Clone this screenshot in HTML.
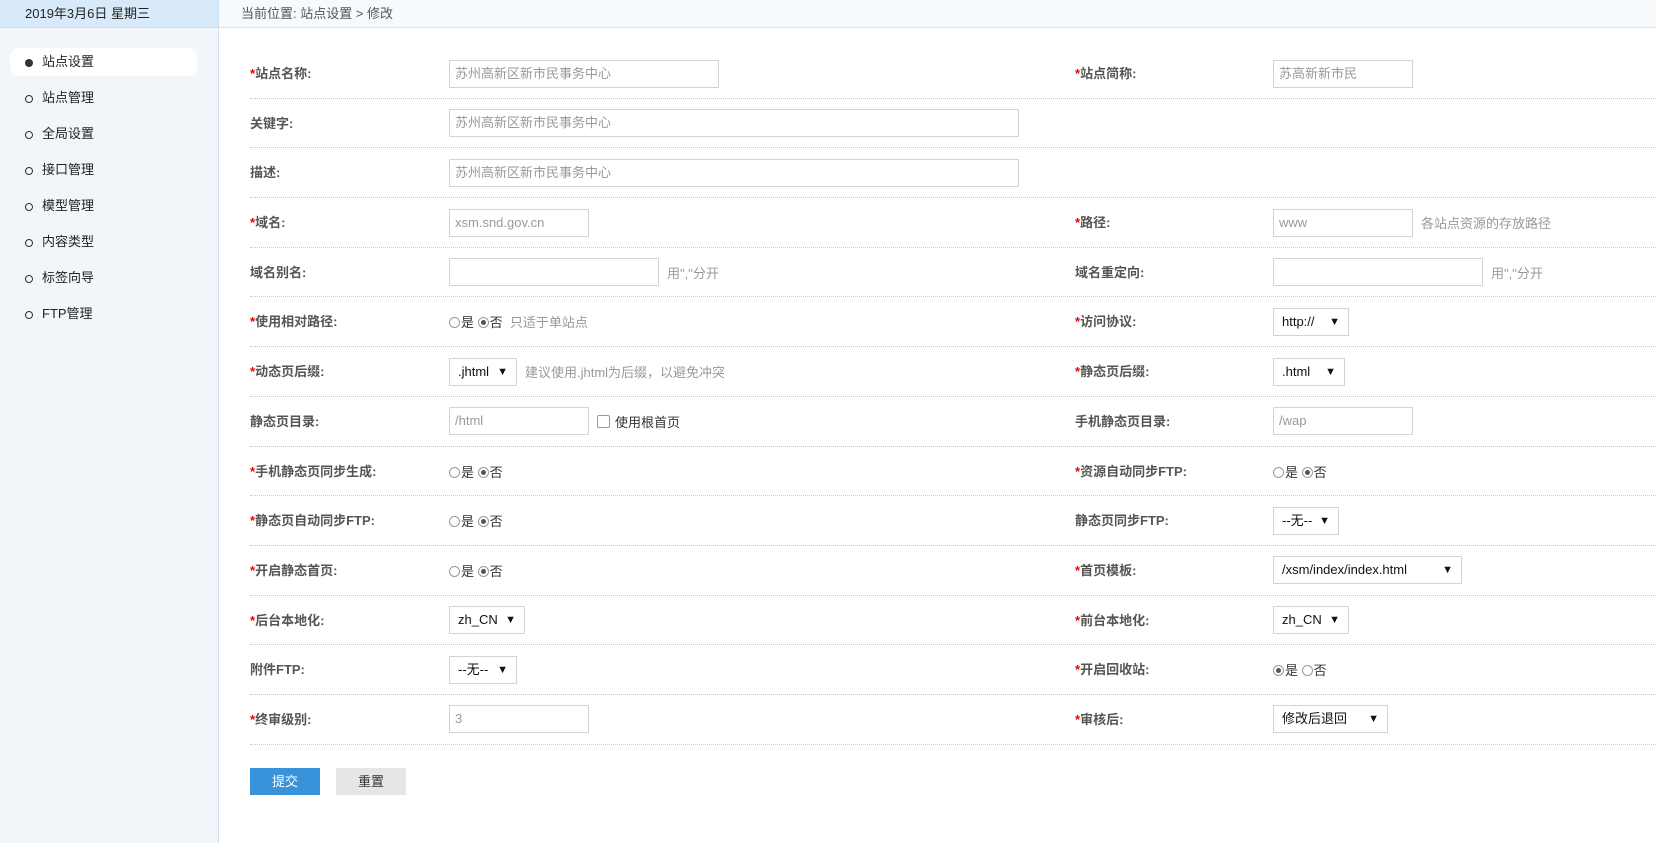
<!DOCTYPE html>
<html><head><meta charset="utf-8"><style>
*{box-sizing:border-box;margin:0;padding:0}
body{width:1656px;height:843px;position:relative;background:#fff;font-family:"Liberation Sans","Noto Sans CJK SC",sans-serif;font-size:13px;color:#333;overflow:hidden}
#side{position:absolute;left:0;top:0;width:219px;height:843px;background:#f2f6fa;border-right:1px solid #c9e0f3}
#date{height:28px;background:#d8eaf9;border-bottom:1px solid #c9e0f3;padding-left:25px;line-height:28px;font-size:13px;color:#222}
#top{position:absolute;left:219px;top:0;right:0;height:28px;background:#f6fafd;border-bottom:1px dotted #c0d4e4;line-height:28px;padding-left:22px;color:#555;font-size:13px}
.mi{position:absolute;left:10px;width:187px;height:28px;line-height:28px;padding-left:32px;font-size:13px;color:#222}
.mi:before{content:"";position:absolute;left:15px;top:11px;width:6px;height:6px;border:1px solid #333;border-radius:50%}
.mi.on{background:#fff;border-radius:9px}
.mi.on:before{background:#333}
#form{position:absolute;left:250px;top:49px;right:0}
.row{height:49.7px;border-bottom:1px dotted #c8c8c8;position:relative}
.l{position:absolute;top:0;line-height:49px;font-weight:bold;color:#555;font-size:13px}
.l i{color:#e00;font-style:normal}
.c{position:absolute;top:0;height:49px;display:flex;align-items:center;color:#999;font-size:13px}
.in{height:28px;border:1px solid #d3d3d3;padding-left:5px;line-height:26px;color:#999;margin-right:8px}
.sel{height:28px;border:1px solid #d3d3d3;padding-left:8px;line-height:26px;color:#111;position:relative;margin-right:8px}
.sel:after{content:"▼";position:absolute;right:8px;top:0;font-size:11px}
.r{display:inline-block;width:11px;height:11px;border:1px solid #999;border-radius:50%;margin-right:1px;position:relative;background:#fff;vertical-align:-1px}
.r.on:after{content:"";position:absolute;left:2px;top:2px;width:5px;height:5px;border-radius:50%;background:#555}
.rg{color:#333}
.btn{position:absolute;top:768px;height:27px;width:70px;text-align:center;line-height:27px;font-size:13px}
</style></head><body>
<div id="side"><div id="date">2019年3月6日 星期三</div>
<div class="mi on" style="top:48px">站点设置</div>
<div class="mi" style="top:84px">站点管理</div>
<div class="mi" style="top:120px">全局设置</div>
<div class="mi" style="top:156px">接口管理</div>
<div class="mi" style="top:192px">模型管理</div>
<div class="mi" style="top:228px">内容类型</div>
<div class="mi" style="top:264px">标签向导</div>
<div class="mi" style="top:300px">FTP管理</div>
</div>
<div id="top">当前位置: 站点设置 &gt; 修改</div>
<div id="form">
<div class="row"><div class="l"><i>*</i>站点名称:</div><div class="c" style="left:199px"><div class="in" style="width:270px">苏州高新区新市民事务中心</div></div><div class="l" style="left:825px"><i>*</i>站点简称:</div><div class="c" style="left:1023px"><div class="in" style="width:140px">苏高新新市民</div></div></div>
<div class="row"><div class="l">关键字:</div><div class="c" style="left:199px"><div class="in" style="width:570px">苏州高新区新市民事务中心</div></div></div>
<div class="row"><div class="l">描述:</div><div class="c" style="left:199px"><div class="in" style="width:570px">苏州高新区新市民事务中心</div></div></div>
<div class="row"><div class="l"><i>*</i>域名:</div><div class="c" style="left:199px"><div class="in" style="width:140px">xsm.snd.gov.cn</div></div><div class="l" style="left:825px"><i>*</i>路径:</div><div class="c" style="left:1023px"><div class="in" style="width:140px">www</div>各站点资源的存放路径</div></div>
<div class="row"><div class="l">域名别名:</div><div class="c" style="left:199px"><div class="in" style="width:210px"></div>用","分开</div><div class="l" style="left:825px">域名重定向:</div><div class="c" style="left:1023px"><div class="in" style="width:210px"></div>用","分开</div></div>
<div class="row"><div class="l"><i>*</i>使用相对路径:</div><div class="c" style="left:199px"><span class="rg"><span class="r"></span>是 <span class="r on"></span>否</span>&nbsp; 只适于单站点</div><div class="l" style="left:825px"><i>*</i>访问协议:</div><div class="c" style="left:1023px"><div class="sel" style="width:76px">http://</div></div></div>
<div class="row"><div class="l"><i>*</i>动态页后缀:</div><div class="c" style="left:199px"><div class="sel" style="width:68px">.jhtml</div>建议使用.jhtml为后缀，以避免冲突</div><div class="l" style="left:825px"><i>*</i>静态页后缀:</div><div class="c" style="left:1023px"><div class="sel" style="width:72px">.html</div></div></div>
<div class="row"><div class="l">静态页目录:</div><div class="c" style="left:199px"><div class="in" style="width:140px">/html</div><span class="r" style="border-radius:2px;width:13px;height:13px;margin-right:5px"></span><span class="rg">使用根首页</span></div><div class="l" style="left:825px">手机静态页目录:</div><div class="c" style="left:1023px"><div class="in" style="width:140px">/wap</div></div></div>
<div class="row"><div class="l"><i>*</i>手机静态页同步生成:</div><div class="c" style="left:199px"><span class="rg"><span class="r"></span>是 <span class="r on"></span>否</span></div><div class="l" style="left:825px"><i>*</i>资源自动同步FTP:</div><div class="c" style="left:1023px"><span class="rg"><span class="r"></span>是 <span class="r on"></span>否</span></div></div>
<div class="row"><div class="l"><i>*</i>静态页自动同步FTP:</div><div class="c" style="left:199px"><span class="rg"><span class="r"></span>是 <span class="r on"></span>否</span></div><div class="l" style="left:825px">静态页同步FTP:</div><div class="c" style="left:1023px"><div class="sel" style="width:66px">--无--</div></div></div>
<div class="row"><div class="l"><i>*</i>开启静态首页:</div><div class="c" style="left:199px"><span class="rg"><span class="r"></span>是 <span class="r on"></span>否</span></div><div class="l" style="left:825px"><i>*</i>首页模板:</div><div class="c" style="left:1023px"><div class="sel" style="width:189px">/xsm/index/index.html</div></div></div>
<div class="row"><div class="l"><i>*</i>后台本地化:</div><div class="c" style="left:199px"><div class="sel" style="width:76px">zh_CN</div></div><div class="l" style="left:825px"><i>*</i>前台本地化:</div><div class="c" style="left:1023px"><div class="sel" style="width:76px">zh_CN</div></div></div>
<div class="row"><div class="l">附件FTP:</div><div class="c" style="left:199px"><div class="sel" style="width:68px">--无--</div></div><div class="l" style="left:825px"><i>*</i>开启回收站:</div><div class="c" style="left:1023px"><span class="rg"><span class="r on"></span>是 <span class="r"></span>否</span></div></div>
<div class="row"><div class="l"><i>*</i>终审级别:</div><div class="c" style="left:199px"><div class="in" style="width:140px">3</div></div><div class="l" style="left:825px"><i>*</i>审核后:</div><div class="c" style="left:1023px"><div class="sel" style="width:115px">修改后退回</div></div></div>
</div>
<div class="btn" style="left:250px;background:#3893db;color:#fff">提交</div>
<div class="btn" style="left:336px;background:#e6e6e6;color:#333">重置</div>
</body></html>
